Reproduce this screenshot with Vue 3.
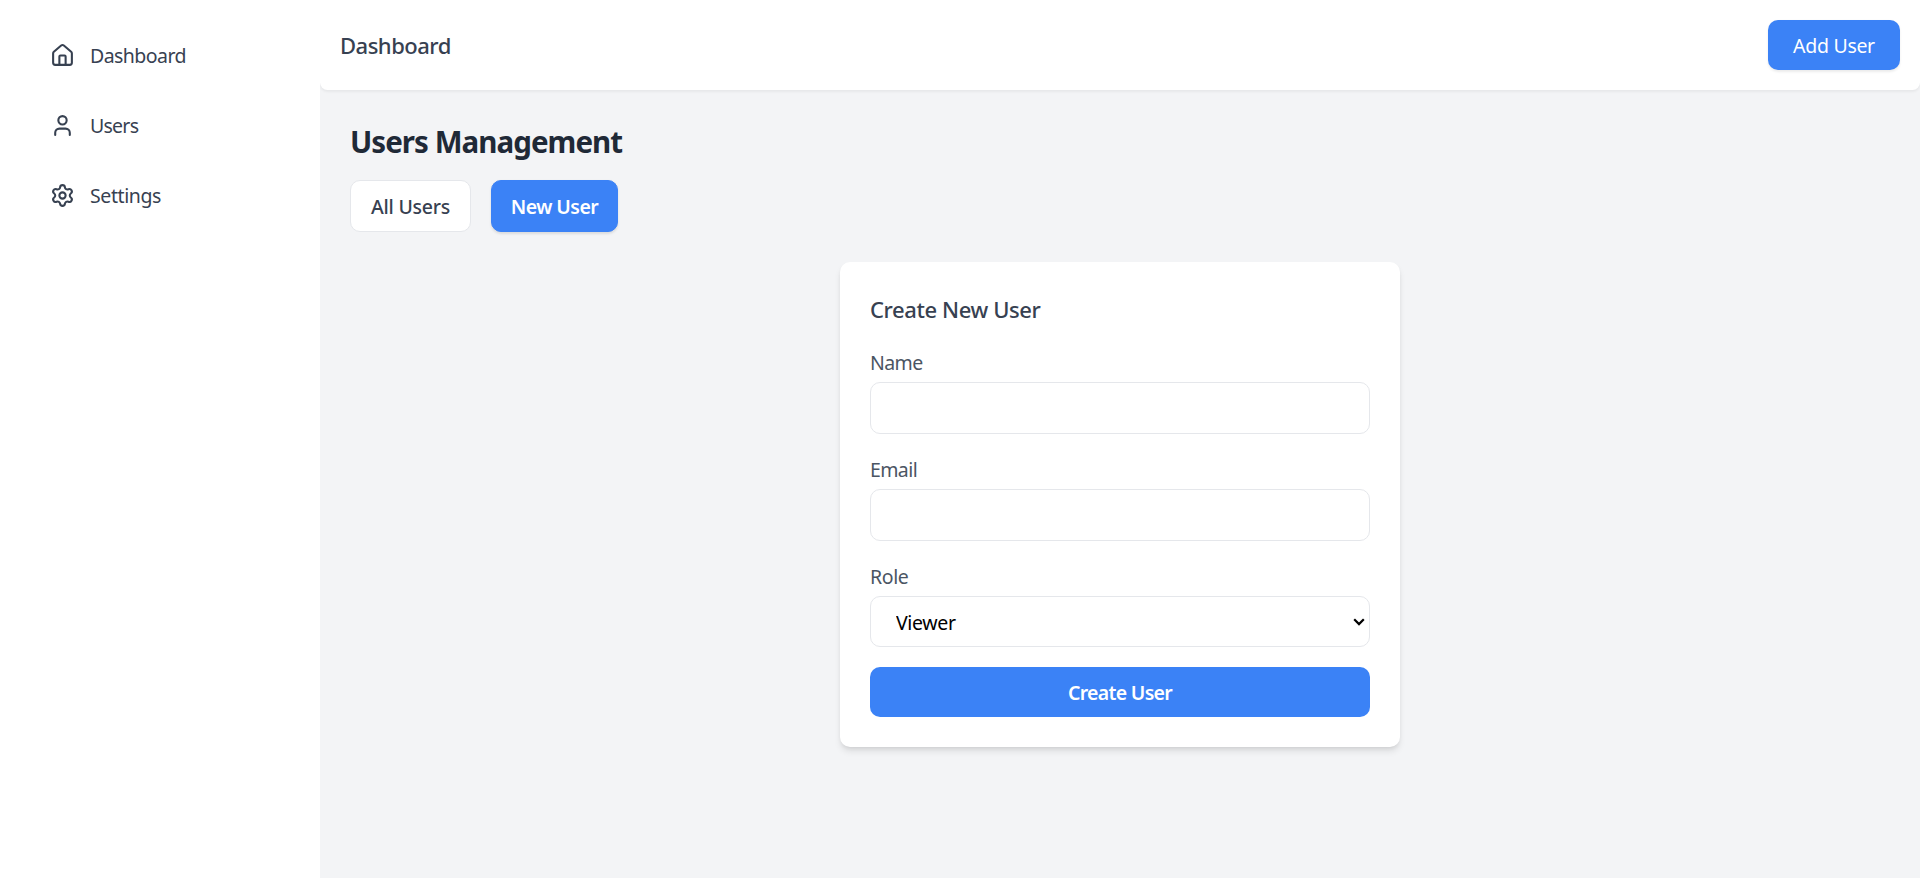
<script setup>
import { ref } from 'vue'

const role = ref('Viewer')
const name = ref('')
const email = ref('')
</script>

<template>
  <div class="layout">
    <aside class="sidebar">
      <a class="nav-item">
        <svg class="icon" viewBox="0 0 24 24">
          <path d="M15 21v-8a1 1 0 0 0-1-1h-4a1 1 0 0 0-1 1v8" />
          <path d="M3 10a2 2 0 0 1 .709-1.528l7-5.999a2 2 0 0 1 2.582 0l7 5.999A2 2 0 0 1 21 10v9a2 2 0 0 1-2 2H5a2 2 0 0 1-2-2z" />
        </svg>
        <span class="t-dash">Dashboard</span>
      </a>
      <a class="nav-item">
        <svg class="icon" viewBox="0 0 24 24">
          <path d="M19 21v-2a4 4 0 0 0-4-4H9a4 4 0 0 0-4 4v2" />
          <circle cx="12" cy="7" r="4" />
        </svg>
        <span class="t-users">Users</span>
      </a>
      <a class="nav-item">
        <svg class="icon" viewBox="0 0 24 24">
          <path d="M9.671 4.136a2.34 2.34 0 0 1 4.659 0 2.34 2.34 0 0 0 3.319 1.915 2.34 2.34 0 0 1 2.33 4.033 2.34 2.34 0 0 0 0 3.831 2.34 2.34 0 0 1-2.33 4.033 2.34 2.34 0 0 0-3.319 1.915 2.34 2.34 0 0 1-4.659 0 2.34 2.34 0 0 0-3.32-1.915 2.34 2.34 0 0 1-2.33-4.033 2.34 2.34 0 0 0 0-3.831A2.34 2.34 0 0 1 6.35 6.051a2.34 2.34 0 0 0 3.319-1.915" />
          <circle cx="12" cy="12" r="3" />
        </svg>
        <span class="t-settings">Settings</span>
      </a>
    </aside>

    <div class="main">
      <header class="topbar">
        <h1 class="topbar-title">Dashboard</h1>
        <button class="add-user">Add User</button>
      </header>

      <main class="content">
        <h2 class="page-title">Users Management</h2>
        <div class="tabs">
          <button class="tab all">All Users</button>
          <button class="tab new active">New User</button>
        </div>

        <form class="card" @submit.prevent>
          <h3 class="card-title">Create New User</h3>
          <label class="label l-name" for="name">Name</label>
          <input id="name" v-model="name" class="input" type="text" />
          <label class="label l-email" for="email">Email</label>
          <input id="email" v-model="email" class="input" type="email" />
          <label class="label l-role" for="role">Role</label>
          <div class="select-wrap">
            <select id="role" v-model="role" class="select">
              <option>Viewer</option>
              <option>Editor</option>
              <option>Admin</option>
            </select>
            <svg class="chevron" viewBox="0 0 12 8"><path d="M1.2 1.3 6 6.1l4.8-4.8" /></svg>
          </div>
          <button class="submit">Create User</button>
        </form>
      </main>
    </div>
  </div>
</template>

<style>
body {
  margin: 0;
  overflow: hidden;
}
</style>

<style scoped>
.layout,
.layout * {
  box-sizing: border-box;
}
.layout {
  display: flex;
  height: 100vh;
  background: #f3f4f6;
  font-family: "Noto Sans", "Open Sans", sans-serif;
  font-size: 19.5px;
  line-height: 30px;
  color: #374151;
}
h1,
h2,
h3 {
  margin: 0;
}
button,
input,
select {
  font: inherit;
  letter-spacing: inherit;
  margin: 0;
  border: 0;
}
.sidebar {
  width: 320px;
  flex: none;
  z-index: 1;
  padding: 30px;
  background: #fff;
  display: flex;
  flex-direction: column;
  gap: 20px;
}
.nav-item {
  display: flex;
  align-items: center;
  gap: 15px;
  height: 50px;
  padding: 0 20px;
}
.nav-item span {
  padding-top: 2px;
}
.t-dash {
  letter-spacing: -0.55px;
}
.t-users {
  letter-spacing: -0.75px;
}
.t-settings {
  letter-spacing: -0.4px;
}
.icon {
  width: 25px;
  height: 25px;
  flex: none;
  fill: none;
  stroke: #374151;
  stroke-width: 2;
  stroke-linecap: round;
  stroke-linejoin: round;
}
.main {
  flex: 1;
  min-width: 0;
}
.topbar {
  height: 90px;
  padding: 0 20px;
  display: flex;
  align-items: center;
  justify-content: space-between;
  background: #fff;
  border-radius: 0 0 7.5px 7.5px;
  box-shadow: 0 1.25px 2.5px rgba(0, 0, 0, 0.05);
}
.topbar-title {
  font-size: 22px;
  font-weight: 500;
  letter-spacing: -0.5px;
}
.add-user {
  width: 132px;
  height: 50px;
  padding: 2px 0 0;
  border-radius: 10px;
  background: #3b82f6;
  color: #fff;
  letter-spacing: -0.3px;
  box-shadow: 0 1.25px 2.5px rgba(0, 0, 0, 0.08);
}
.content {
  padding: 30px;
}
.page-title {
  font-size: 29.5px;
  line-height: 40px;
  margin: 2px 0 18px;
  font-weight: 700;
  letter-spacing: -0.95px;
  color: #1f2937;
}
.tabs {
  display: flex;
  gap: 20px;
  margin-bottom: 30px;
}
.tab {
  height: 52px;
  padding: 2px 0 0;
  border: 1px solid #e5e7eb;
  border-radius: 10px;
  background: #fff;
  color: #374151;
  font-weight: 500;
  letter-spacing: -0.25px;
  white-space: nowrap;
}
.tab.all {
  width: 121px;
}
.tab.new {
  width: 127px;
  font-weight: 600;
  letter-spacing: -0.55px;
}
.tab.active {
  border-color: #3b82f6;
  background: #3b82f6;
  color: #fff;
  box-shadow: 0 1.25px 2.5px rgba(0, 0, 0, 0.1);
}
.card {
  width: 560px;
  height: 485px;
  margin: 0 auto;
  padding: 30px;
  display: flex;
  flex-direction: column;
  background: #fff;
  border-radius: 10px;
  box-shadow: 0 5px 7.5px -1.25px rgba(0, 0, 0, 0.1), 0 2.5px 5px -2.5px rgba(0, 0, 0, 0.1);
}
.card-title {
  font-size: 22px;
  line-height: 35px;
  font-weight: 500;
  letter-spacing: -0.4px;
  margin-bottom: 20px;
}
.label {
  color: #4b5563;
  padding-top: 1px;
  margin-bottom: 4px;
  letter-spacing: -0.6px;
}
.l-role {
  letter-spacing: -0.4px;
}
.input,
.select {
  display: block;
  width: 100%;
  height: 52px;
  flex: none;
  padding: 0 24px;
  border: 1px solid #e5e7eb;
  border-radius: 10px;
  background: #fff;
}
.input {
  margin-bottom: 20px;
}
.select-wrap {
  position: relative;
  margin-bottom: 20px;
}
.select {
  height: 51px;
  padding: 2px 25px 0;
  letter-spacing: -0.35px;
  appearance: none;
  color: #000;
}
.chevron {
  position: absolute;
  right: 5px;
  top: 22px;
  width: 12px;
  height: 8px;
  fill: none;
  stroke: #000;
  stroke-width: 2.2;
}
.submit {
  height: 50px;
  flex: none;
  padding: 2px 0 0;
  border-radius: 10px;
  background: #3b82f6;
  color: #fff;
  font-weight: 600;
  letter-spacing: -0.7px;
}
</style>
